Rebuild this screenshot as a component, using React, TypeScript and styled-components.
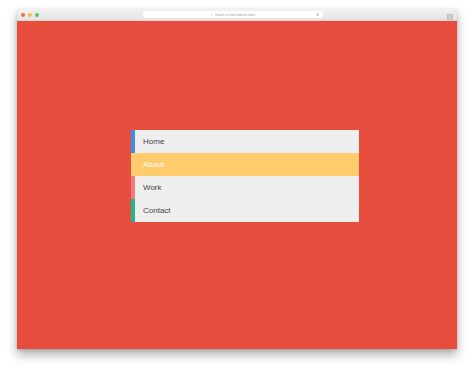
import React from 'react';
import styled, { createGlobalStyle } from 'styled-components';

const GlobalStyle = createGlobalStyle`
  html, body {
    margin: 0;
    padding: 0;
    background: #ffffff;
    font-family: "Liberation Sans", Arial, sans-serif;
  }
`;

const Page = styled.div`
  width: 474px;
  height: 373px;
  padding: 9px 0 0 17px;
  box-sizing: border-box;
`;

const Window = styled.div`
  width: 440px;
  box-shadow: 0 6px 10px rgba(0, 0, 0, 0.3), 0 1px 3px rgba(0, 0, 0, 0.15);
`;

const Chrome = styled.div`
  height: 12px;
  background: linear-gradient(#f2f2f2, #e4e4e4);
  border-bottom: 1px solid #d6d6d6;
  box-sizing: border-box;
  display: flex;
  align-items: center;
  padding: 0 4px 0 4px;
`;

const Dots = styled.div`
  display: flex;
  gap: 3px;
  width: 122px;
`;

const Dot = styled.span<{ $color: string }>`
  width: 4px;
  height: 4px;
  border-radius: 50%;
  background: ${({ $color }) => $color};
`;

const Address = styled.div`
  width: 180px;
  height: 7px;
  background: #ffffff;
  border-radius: 2px;
  display: flex;
  align-items: center;
  justify-content: center;
  position: relative;
  font-size: 3px;
  color: #9a9a9a;
  gap: 2px;
`;

const Reload = styled.span`
  position: absolute;
  right: 4px;
  font-size: 4px;
  color: #888;
`;

const Spacer = styled.div`
  flex: 1;
`;

const Tab = styled.div`
  width: 6px;
  height: 6px;
  background: #d0d0d0;
  border: 1px solid #c0c0c0;
  box-sizing: border-box;
  margin-top: 4px;
`;

const Content = styled.div`
  height: 328px;
  background: #e74c3c;
  padding: 109px 0 0 114px;
  box-sizing: border-box;
`;

const Menu = styled.ul`
  list-style: none;
  margin: 0;
  padding: 0;
  width: 228px;
  display: flex;
  flex-direction: column;
`;

const Item = styled.li<{ $accent: string; $active?: boolean }>`
  height: 23px;
  display: flex;
  align-items: center;
  box-sizing: border-box;
  padding-left: 8px;
  border-left: 4px solid ${({ $accent }) => $accent};
  background: ${({ $active }) => ($active ? '#fecb6d' : '#efefef')};
  color: ${({ $active }) => ($active ? '#ffffff' : '#444444')};
  font-size: 8px;
`;

const items = [
  { label: 'Home', accent: '#3a8ee0' },
  { label: 'About', accent: '#fecb6d', active: true },
  { label: 'Work', accent: '#f07d7a' },
  { label: 'Contact', accent: '#21b786' },
];

export default function App() {
  return (
    <>
      <GlobalStyle />
      <Page>
        <Window>
          <Chrome>
            <Dots>
              <Dot $color="#ee6a5f" />
              <Dot $color="#f5bd4f" />
              <Dot $color="#61c454" />
            </Dots>
            <Address>
              <span>⌕</span>
              <span>Search or enter website name</span>
              <Reload>↻</Reload>
            </Address>
            <Spacer />
            <Tab />
          </Chrome>
          <Content>
            <Menu>
              {items.map((it) => (
                <Item key={it.label} $accent={it.accent} $active={it.active}>
                  {it.label}
                </Item>
              ))}
            </Menu>
          </Content>
        </Window>
      </Page>
    </>
  );
}
